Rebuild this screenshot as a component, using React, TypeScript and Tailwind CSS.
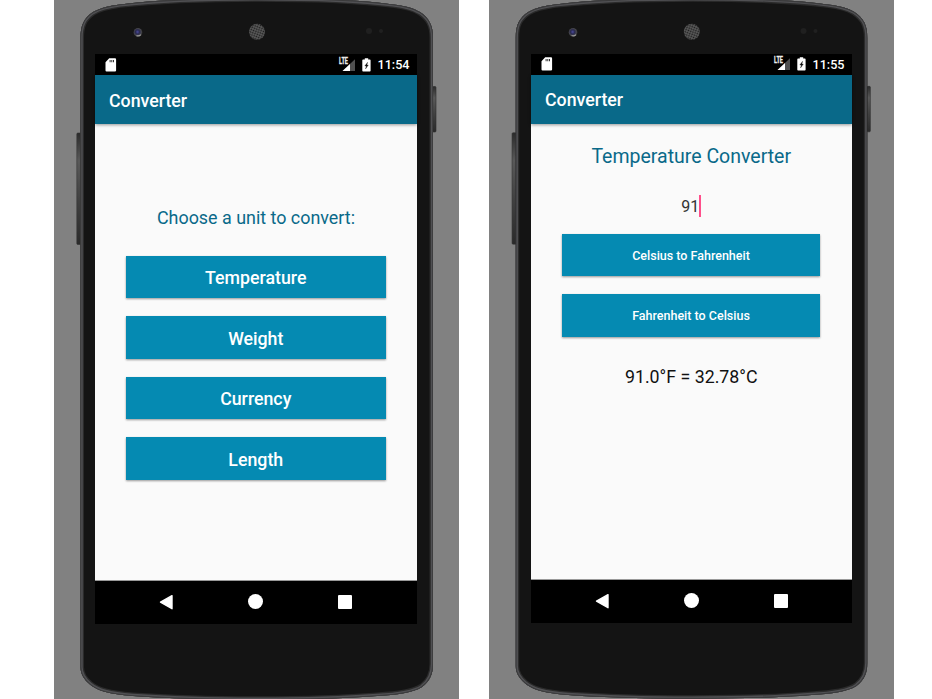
import type { ReactNode } from "react";

const FONT = "font-['Roboto',sans-serif]";

function PhoneBody({ second }: { second?: boolean }) {
  const outline =
    "M26.5 667V38C26.5 25 30 18 39 12C47 7.3 56 5.8 66 4.4C105 -0.2 145 -1.8 203 -1.8C261 -1.8 305 -0.2 339 4.4C352 6 359 7.8 366 12C375 18 379 25 379 38V664C379 674 376 681 368 687C360 692.5 342 695 323 696C285 699 245 699.7 203 699.7C161 699.7 115 698.5 79 696C55 694 44 691 36 684.5C30 679.5 26.5 674 26.5 667Z";
  return (
    <svg className="absolute inset-0" width="405" height="699" viewBox="0 0 405 699" aria-hidden="true">
      <defs>
        <linearGradient id="key" x1="0" x2="0" y1="0" y2="1">
          <stop offset="0" stopColor="#2b2b2b" />
          <stop offset="0.25" stopColor="#595959" />
          <stop offset="0.6" stopColor="#414141" />
          <stop offset="1" stopColor="#2a2a2a" />
        </linearGradient>
        <pattern id="mesh" width="2.4" height="2.4" patternUnits="userSpaceOnUse" patternTransform="rotate(20)">
          <rect width="2.4" height="2.4" fill="#5c5c5c" />
          <circle cx="1.2" cy="1.2" r="0.85" fill="#1b1b1b" />
        </pattern>
        <radialGradient id="lens" cx="0.45" cy="0.45" r="0.6">
          <stop offset="0" stopColor="#4b4b9c" />
          <stop offset="0.4" stopColor="#29294f" />
          <stop offset="0.7" stopColor="#46464c" />
          <stop offset="1" stopColor="#242424" />
        </radialGradient>
        <clipPath id="edge">
          <path d={outline} />
        </clipPath>
      </defs>
      <g transform={second ? "translate(0.3 0) scale(0.9975 0.9985)" : undefined}>
        <rect x="22.8" y="133" width="4.4" height="111.5" rx="1" fill="url(#key)" stroke="#333" strokeWidth="0.6" />
        <rect x="378.6" y="86.5" width="3.4" height="45.5" rx="1" fill="url(#key)" stroke="#2b2b2b" strokeWidth="0.6" />
        <path d={outline} fill="#141414" />
        <path d={outline} fill="none" stroke="#2b2b2b" strokeWidth="7" clipPath="url(#edge)" />
        <path d={outline} fill="none" stroke="#505053" strokeWidth="4.4" clipPath="url(#edge)" />
        <path d={outline} fill="none" stroke="#3a3a3b" strokeWidth="1.6" clipPath="url(#edge)" />
        <circle cx="84" cy="32.4" r="4.4" fill="url(#lens)" />
        <path d="M82.5 35.6q2.6 1 4.4-1" fill="none" stroke="#999" strokeWidth="1.2" />
        <circle cx="203" cy="31.8" r="8" fill="url(#mesh)" />
        <circle cx="315" cy="31" r="3" fill="#202020" />
        <circle cx="327" cy="31" r="2" fill="#202020" />
      </g>
    </svg>
  );
}

function StatusBar({ time, second }: { time: string; second?: boolean }) {
  return (
    <div className={`flex h-[21px] shrink-0 items-center bg-black pl-[10px] ${second ? "pr-[7px]" : "pr-[7.5px]"}`}>
      <svg width="12" height="14" viewBox="0 0 12 14">
        <path d="M4.2 0.3H10a1.1 1.1 0 0 1 1.1 1.1V12.4a1.1 1.1 0 0 1-1.1 1.1H1.6a1.1 1.1 0 0 1-1.1-1.1V4.2Z" fill="#fff" />
        <path d="M4.6 2h1v2.2h-1zM6.3 2h1v2.2h-1zM8 2h1v2.2H8z" fill="#333" />
      </svg>
      <div className="ml-auto flex items-center text-white">
        <svg className="overflow-visible" width="18" height="20" viewBox="0 -3 18 20">
          <path d="M17 1.2V13H4.5Z" fill="#505050" />
          <path d="M12 5.9V13H4.5Z" fill="#fff" />
          <path d="M0 0H9.8V7.2H0Z" fill="#000" />
          <text
            x="1"
            y="6.3"
            fontSize="8.6"
            fontWeight="700"
            fontFamily="Roboto, sans-serif"
            fill="#eee"
            stroke="#eee"
            strokeWidth="0.3"
            textLength="9"
            lengthAdjust="spacingAndGlyphs"
          >
            LTE
          </text>
        </svg>
        <svg className="ml-[6px]" width="9" height="14" viewBox="0 0 9 14">
          <path d="M2.8 0.2H6.2V1.4H7.8a.8.8 0 0 1 .8.8V12.7a.8.8 0 0 1-.8.8H1.1a.8.8 0 0 1-.8-.8V2.2a.8.8 0 0 1 .8-.8H2.8Z" fill="#fff" />
          <path d="M5.6 4.2L2.8 7.9H4.3L3.5 11L6.3 7.1H4.9Z" fill="#111" stroke="#111" strokeWidth="0.3" />
        </svg>
        <span className="ml-[6.5px] pt-px text-[12.6px] leading-[20px] font-medium">{time}</span>
      </div>
    </div>
  );
}

function AppBar() {
  return (
    <header className="z-10 flex h-[49px] shrink-0 items-center bg-[#096989] pt-[3px] pl-[14px] text-[17.75px] font-medium text-white shadow-[0_1px_3px_rgba(0,0,0,0.4)]">
      Converter
    </header>
  );
}

function NavBar() {
  return (
    <nav className="flex h-[43.5px] shrink-0 items-center bg-black pb-px pl-[64px]">
      <svg width="15" height="16" viewBox="0 0 15 16">
        <path d="M13 1.7V14.7L1.5 8.2Z" fill="#fff" stroke="#fff" strokeWidth="1.4" strokeLinejoin="round" />
      </svg>
      <span className="ml-[74px] size-[15px] rounded-full bg-white" />
      <span className="ml-[75px] size-[14px] rounded-[1px] bg-white" />
    </nav>
  );
}

function Phone({ time, second, children }: { time: string; second?: boolean; children: ReactNode }) {
  return (
    <section className={`relative h-[699px] w-[405px] shrink-0 overflow-hidden bg-[#818181] ${second ? "pt-[53.5px] pl-[42px]" : "pt-[54px] pl-[41px]"}`}>
      <PhoneBody second={second} />
      <div className={`relative flex flex-col bg-[#fafafa] ${second ? "h-[569.5px] w-[320.5px]" : "h-[570px] w-[322px]"}`}>
        <StatusBar time={time} second={second} />
        <AppBar />
        <main className="flex min-h-0 flex-1 flex-col items-center border-b border-[#999]">{children}</main>
        <NavBar />
      </div>
    </section>
  );
}

function Button({ label, small }: { label: string; small?: boolean }) {
  return (
    <button
      className={`flex h-[42.5px] shrink-0 items-center justify-center bg-[#058ab2] font-medium text-white shadow-[0_1px_2px_rgba(0,0,0,0.4)] ${
        small ? "w-[258.5px] pt-[2.5px] text-[12.5px]" : "w-[259.5px] pt-[3.6px] text-[17.75px]"
      }`}
    >
      {label}
    </button>
  );
}

export default function App() {
  return (
    <div className={`flex h-[699px] w-[932px] gap-[30px] overflow-hidden bg-white pl-[54px] ${FONT}`}>
      <Phone time="11:54">
        <h2 className="mt-[82px] h-[24px] text-[17.9px] leading-[24px] text-[#096989]">Choose a unit to convert:</h2>
        <div className="mt-[25.6px] -ml-[0.5px] flex flex-col gap-[18px]">
          <Button label="Temperature" />
          <Button label="Weight" />
          <Button label="Currency" />
          <Button label="Length" />
        </div>
      </Phone>
      <Phone time="11:55" second>
        <h2 className="mt-[21.5px] h-[24px] text-[19.5px] leading-[24px] text-[#096989]">Temperature Converter</h2>
        <div className="mt-[25px] flex h-[24px] items-center text-[16px] text-[#333]">
          <span className="pt-px">91</span>
          <span className="h-[22px] w-[2px] bg-[#ff4f8b]" />
        </div>
        <div className="mt-[15.8px] -ml-[0.5px] flex flex-col gap-[18px]">
          <Button label="Celsius to Fahrenheit" small />
          <Button label="Fahrenheit to Celsius" small />
        </div>
        <p className="mt-[28px] h-[24px] text-[17.8px] leading-[24px] text-[#111]">91.0°F = 32.78°C</p>
      </Phone>
    </div>
  );
}
